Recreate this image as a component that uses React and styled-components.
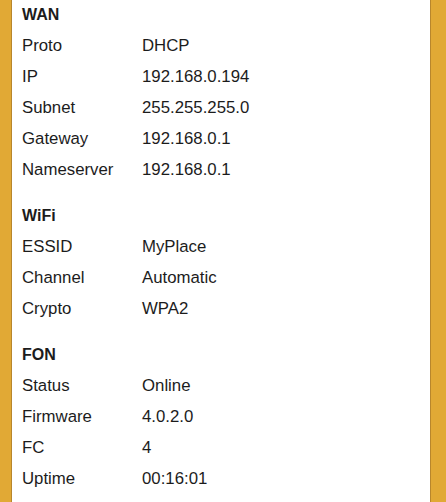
import React from "react";
import styled, { createGlobalStyle } from "styled-components";

const GlobalStyle = createGlobalStyle`
  html, body {
    margin: 0;
    padding: 0;
    background-color: #e1a935;
  }
  body {
    font-family: "Liberation Sans", Arial, sans-serif;
  }
`;

const Frame = styled.div`
  display: flex;
  padding: 0 15px 0 11px;
  min-height: 100vh;
  overflow: hidden;
`;

const Panel = styled.div`
  flex: 1;
  background-color: #ffffff;
  border-left: 1px solid #b8862c;
  border-right: 1px solid #b8862c;
  margin-top: -1px;
  padding: 0 10px 20px;
  color: #1c1c1c;
`;

const Section = styled.section`
  margin-bottom: 15px;
`;

const Heading = styled.h3`
  margin: 0;
  font-size: 16px;
  font-weight: bold;
  line-height: 31px;
  height: 31px;
`;

const Row = styled.div`
  display: grid;
  grid-template-columns: 120px 1fr;
  align-items: center;
  height: 31px;
  font-size: 16.8px;
`;

const Label = styled.span``;
const Value = styled.span``;

const sections = [
  {
    heading: "WAN",
    rows: [
      ["Proto", "DHCP"],
      ["IP", "192.168.0.194"],
      ["Subnet", "255.255.255.0"],
      ["Gateway", "192.168.0.1"],
      ["Nameserver", "192.168.0.1"],
    ],
  },
  {
    heading: "WiFi",
    rows: [
      ["ESSID", "MyPlace"],
      ["Channel", "Automatic"],
      ["Crypto", "WPA2"],
    ],
  },
  {
    heading: "FON",
    rows: [
      ["Status", "Online"],
      ["Firmware", "4.0.2.0"],
      ["FC", "4"],
      ["Uptime", "00:16:01"],
    ],
  },
];

const App = () => {
  return (
    <>
      <GlobalStyle />
      <Frame>
        <Panel>
          {sections.map(section => (
            <Section key={section.heading}>
              <Heading>{section.heading}</Heading>
              {section.rows.map(([label, value]) => (
                <Row key={label}>
                  <Label>{label}</Label>
                  <Value>{value}</Value>
                </Row>
              ))}
            </Section>
          ))}
        </Panel>
      </Frame>
    </>
  );
};

export default App;
